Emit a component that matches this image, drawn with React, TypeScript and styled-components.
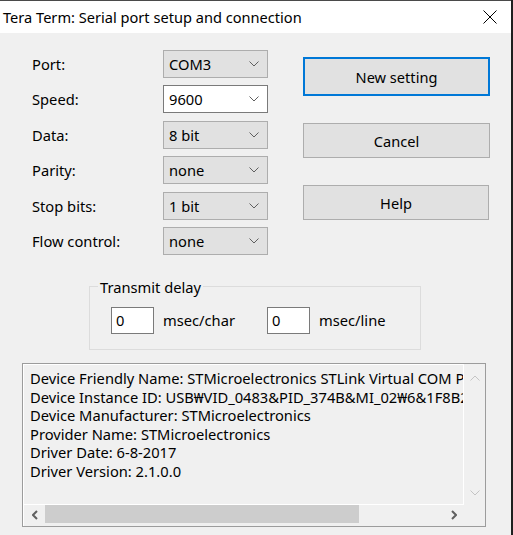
import React from "react";
import styled, { createGlobalStyle } from "styled-components";

const Global = createGlobalStyle`
  html, body { margin: 0; padding: 0; background: #1f1f1f; }
  body { font-family: "Noto Sans", "Liberation Sans", sans-serif; }
`;

const Window = styled.div`
  width: 511px;
  height: 535px;
  background: #f0f0f0;
  border-top: 1px solid #4a4a4a;
  box-sizing: border-box;
  display: flex;
  flex-direction: column;
  font-family: "Noto Sans", "Liberation Sans", sans-serif;
  color: #000;
`;

const TitleBar = styled.div`
  height: 32px;
  background: #ffffff;
  display: flex;
  align-items: center;
  justify-content: space-between;
  padding: 0 14px 0 3px;
  font-size: 14.6px;
`;

const TitleText = styled.span``;

const CloseIcon = () => (
  <svg width="14" height="14" viewBox="0 0 14 14">
    <path d="M0.5 0.5 L13.5 13.5 M13.5 0.5 L0.5 13.5" stroke="#000" strokeWidth="1" />
  </svg>
);

const Body = styled.div`
  display: flex;
  flex-direction: column;
  padding: 17px 0 0 0;
`;

const TopSection = styled.div`
  display: flex;
  padding-left: 32px;
`;

const Form = styled.div`
  display: grid;
  grid-template-columns: 131px 105px;
  grid-auto-rows: 28px;
  row-gap: 7.4px;
  align-items: center;
`;

const Label = styled.span`
  font-size: 14.7px;
`;

const Combo = styled.div<{ $focused?: boolean }>`
  height: 28px;
  box-sizing: border-box;
  border: 1px solid ${(p) => (p.$focused ? "#7a7a7a" : "#adadad")};
  background: ${(p) => (p.$focused ? "#ffffff" : "#e1e1e1")};
  display: flex;
  align-items: center;
  justify-content: space-between;
  padding: 0 8px 0 5px;
  font-size: 14.7px;
`;

const Chevron = ({ color = "#5f5f5f", up = false }: { color?: string; up?: boolean }) => (
  <svg width="10" height="6" viewBox="0 0 10 6">
    <polyline
      points={up ? "0.5,5.5 5,1 9.5,5.5" : "0.5,0.5 5,5 9.5,0.5"}
      fill="none"
      stroke={color}
      strokeWidth="1"
    />
  </svg>
);

const Buttons = styled.div`
  display: flex;
  flex-direction: column;
  margin-left: 35px;
  padding-top: 7px;
  gap: 27px;
`;

const Button = styled.div<{ $default?: boolean; $w?: number }>`
  width: ${(p) => p.$w ?? 187}px;
  height: ${(p) => (p.$default ? 39 : 35)}px;
  box-sizing: border-box;
  border: ${(p) => (p.$default ? "2px solid #0078d7" : "1px solid #adadad")};
  background: #e1e1e1;
  display: flex;
  align-items: center;
  justify-content: center;
  font-size: 14.6px;
`;

const Group = styled.fieldset`
  margin: 22px 0 0 89px;
  width: 332px;
  height: 73px;
  box-sizing: border-box;
  border: 1px solid #dcdcdc;
  padding: 0 0 0 21px;
  display: block;
`;

const Legend = styled.legend`
  font-size: 14.7px;
  line-height: 20px;
  padding: 0 2px;
  margin-left: -13px;
`;

const DelayRow = styled.div`
  display: flex;
  align-items: center;
  margin-top: 10px;
`;

const NumBox = styled.div`
  width: 43px;
  height: 27px;
  box-sizing: border-box;
  border: 1px solid #7a7a7a;
  background: #fff;
  display: flex;
  align-items: center;
  padding-left: 4px;
  font-size: 14.7px;
`;

const Unit = styled.span<{ $w: number }>`
  font-size: 14.7px;
  margin-left: 9px;
  width: ${(p) => p.$w}px;
`;

const InfoBox = styled.div`
  margin: 13px 0 0 22px;
  width: 464px;
  height: 164px;
  box-sizing: border-box;
  border: 1px solid #9c9c9c;
  display: grid;
  grid-template-columns: 441px 21px;
  grid-template-rows: 141px 21px;
`;

const Viewport = styled.div`
  border: 1px solid #ffffff;
  overflow: hidden;
  padding: 4px 0 0 6px;
  font-size: 14.7px;
  line-height: 18.6px;
  white-space: nowrap;
`;

const VScroll = styled.div`
  display: flex;
  flex-direction: column;
  justify-content: space-between;
  align-items: center;
  padding: 11px 0 9px;
`;

const HScroll = styled.div`
  display: flex;
  align-items: center;
  border-left: 1px solid #fff;
`;

const ArrowCell = styled.div`
  width: 21px;
  height: 21px;
  display: flex;
  align-items: center;
  justify-content: center;
`;

const Thumb = styled.div`
  width: 314px;
  height: 18px;
  margin-top: -3px;
  background: #cdcdcd;
`;

const Track = styled.div`
  flex: 1;
  display: flex;
  align-items: center;
`;

const Corner = styled.div`
  background: #f0f0f0;
`;

const SideArrow = ({ dir }: { dir: "left" | "right" }) => (
  <svg width="6" height="10" viewBox="0 0 6 10">
    <polyline
      points={dir === "left" ? "5,1 1,5 5,9" : "1,1 5,5 1,9"}
      fill="none"
      stroke="#606060"
      strokeWidth="2"
    />
  </svg>
);

const rows = [
  ["Port:", "COM3", false],
  ["Speed:", "9600", true],
  ["Data:", "8 bit", false],
  ["Parity:", "none", false],
  ["Stop bits:", "1 bit", false],
  ["Flow control:", "none", false],
] as const;

const info = [
  "Device Friendly Name: STMicroelectronics STLink Virtual COM Port (COM3)",
  "Device Instance ID: USB₩VID_0483&PID_374B&MI_02₩6&1F8B2A3&0&0002",
  "Device Manufacturer: STMicroelectronics",
  "Provider Name: STMicroelectronics",
  "Driver Date: 6-8-2017",
  "Driver Version: 2.1.0.0",
];

export default function App() {
  return (
    <>
      <Global />
      <Window>
        <TitleBar>
          <TitleText>Tera Term: Serial port setup and connection</TitleText>
          <CloseIcon />
        </TitleBar>
        <Body>
          <TopSection>
            <Form>
              {rows.map(([label, value, focused]) => (
                <React.Fragment key={label}>
                  <Label>{label}</Label>
                  <Combo $focused={focused}>
                    <span>{value}</span>
                    <Chevron />
                  </Combo>
                </React.Fragment>
              ))}
            </Form>
            <Buttons>
              <Button $default>New setting</Button>
              <Button>Cancel</Button>
              <Button $w={186}>Help</Button>
            </Buttons>
          </TopSection>
          <Group>
            <Legend>Transmit delay</Legend>
            <DelayRow>
              <NumBox>0</NumBox>
              <Unit $w={104}>msec/char</Unit>
              <NumBox>0</NumBox>
              <Unit $w={70}>msec/line</Unit>
            </DelayRow>
          </Group>
          <InfoBox>
            <Viewport>
              {info.map((l) => (
                <div key={l}>{l}</div>
              ))}
            </Viewport>
            <VScroll>
              <Chevron color="#c4c4c4" up />
              <Chevron color="#c4c4c4" />
            </VScroll>
            <HScroll>
              <ArrowCell>
                <SideArrow dir="left" />
              </ArrowCell>
              <Track>
                <Thumb />
              </Track>
              <ArrowCell>
                <SideArrow dir="right" />
              </ArrowCell>
            </HScroll>
            <Corner />
          </InfoBox>
        </Body>
      </Window>
    </>
  );
}
